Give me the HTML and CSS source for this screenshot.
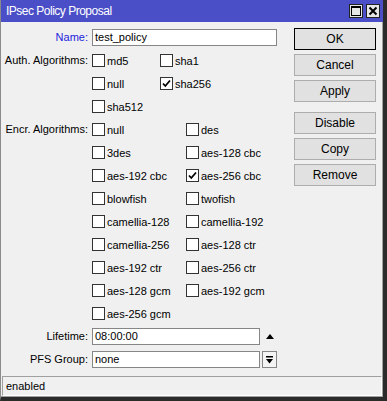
FILE: index.html
```html
<!DOCTYPE html>
<html lang="en">
<head>
    <meta charset="UTF-8">
    <title>IPsec Policy Proposal</title>
    <link rel="stylesheet" href="styles.css">
</head>
<body>
    <div class="window">
        <div class="titlebar">
            <span class="title">IPsec Policy Proposal</span>
            <div class="title-buttons">
                <span class="tbtn">
                    <svg width="10" height="10" viewBox="0 0 10 10"><rect x="0.5" y="0.5" width="9" height="9" fill="none" stroke="#000"/><rect x="0" y="0" width="10" height="2" fill="#000"/></svg>
                </span>
                <span class="tbtn">
                    <svg width="10" height="10" viewBox="0 0 10 10"><path d="M1.5 1.5 L8.5 8.5 M8.5 1.5 L1.5 8.5" stroke="#000" stroke-width="2"/></svg>
                </span>
            </div>
        </div>

        <div class="content">
            <div class="form">
                <div class="label name-label">Name:</div>
                <div class="field"><div class="input name-input">test_policy</div></div>

                <div class="label">Auth. Algorithms:</div>
                <div class="checks auth">
                    <span class="check"><i class="box"></i>md5</span>
                    <span class="check"><i class="box"></i>sha1</span>
                    <span class="check"><i class="box"></i>null</span>
                    <span class="check"><i class="box checked"><svg width="11" height="11" viewBox="0 0 11 11"><path d="M2 5.5 L4.3 8 L9 2.5" fill="none" stroke="#000" stroke-width="1.8"/></svg></i>sha256</span>
                    <span class="check"><i class="box"></i>sha512</span>
                </div>

                <div class="label">Encr. Algorithms:</div>
                <div class="checks encr">
                    <span class="check"><i class="box"></i>null</span>
                    <span class="check"><i class="box"></i>des</span>
                    <span class="check"><i class="box"></i>3des</span>
                    <span class="check"><i class="box"></i>aes-128 cbc</span>
                    <span class="check"><i class="box"></i>aes-192 cbc</span>
                    <span class="check"><i class="box checked"><svg width="11" height="11" viewBox="0 0 11 11"><path d="M2 5.5 L4.3 8 L9 2.5" fill="none" stroke="#000" stroke-width="1.8"/></svg></i>aes-256 cbc</span>
                    <span class="check"><i class="box"></i>blowfish</span>
                    <span class="check"><i class="box"></i>twofish</span>
                    <span class="check"><i class="box"></i>camellia-128</span>
                    <span class="check"><i class="box"></i>camellia-192</span>
                    <span class="check"><i class="box"></i>camellia-256</span>
                    <span class="check"><i class="box"></i>aes-128 ctr</span>
                    <span class="check"><i class="box"></i>aes-192 ctr</span>
                    <span class="check"><i class="box"></i>aes-256 ctr</span>
                    <span class="check"><i class="box"></i>aes-128 gcm</span>
                    <span class="check"><i class="box"></i>aes-192 gcm</span>
                    <span class="check"><i class="box"></i>aes-256 gcm</span>
                </div>

                <div class="label">Lifetime:</div>
                <div class="field">
                    <div class="input short-input">08:00:00</div>
                    <span class="up-arrow"></span>
                </div>

                <div class="label">PFS Group:</div>
                <div class="field">
                    <div class="input short-input">none</div>
                    <span class="drop-btn">
                        <svg width="7" height="8" viewBox="0 0 7 8"><rect x="0" y="0" width="7" height="1.5" fill="#000"/><polygon points="0,3 7,3 3.5,7.5" fill="#000"/></svg>
                    </span>
                </div>
            </div>

            <div class="actions">
                <button class="btn default">OK</button>
                <button class="btn">Cancel</button>
                <button class="btn">Apply</button>
                <button class="btn spaced">Disable</button>
                <button class="btn">Copy</button>
                <button class="btn">Remove</button>
            </div>
        </div>

        <div class="statusbar">enabled</div>
    </div>
</body>
</html>
```

FILE: styles.css
```css
body {
    margin: 0;
    background: #f0f0f0;
    font-family: "Liberation Sans", Arial, sans-serif;
    font-size: 11px;
    color: #000;
}
.window {
    width: 387px;
    height: 401px;
    box-sizing: border-box;
    border-left: 1px solid #8a8a8a;
    border-right: 4px solid #2b2b2b;
    border-bottom: 4px solid #2b2b2b;
    box-shadow: inset -1px -1px 0 #a0a0a0;
    display: flex;
    flex-direction: column;
    background: #f0f0f0;
}
.titlebar {
    height: 22px;
    background: #4b4fc7;
    display: flex;
    align-items: center;
    padding: 0 3px 0 5px;
}
.title {
    color: #fff;
    font-size: 12px;
    letter-spacing: -0.5px;
    flex: 1;
}
.title-buttons {
    display: flex;
    gap: 3px;
}
.tbtn {
    width: 14px;
    height: 14px;
    box-sizing: border-box;
    border: 1px solid #222;
    background: #e6e6e6;
    display: flex;
    align-items: center;
    justify-content: center;
}
.content {
    display: flex;
    padding-top: 4px;
}
.form {
    width: 285px;
    display: grid;
    grid-template-columns: 87px 1fr;
    column-gap: 4px;
    align-content: start;
}
.label {
    height: 23px;
    line-height: 23px;
    text-align: right;
    white-space: nowrap;
}
.name-label {
    color: #2323dc;
}
.field {
    height: 23px;
    display: flex;
    align-items: center;
}
.input {
    height: 17px;
    box-sizing: border-box;
    border: 1px solid #868686;
    background: #fff;
    padding: 0 2px;
    line-height: 15px;
}
.name-input {
    width: 185px;
}
.short-input {
    width: 168px;
}
.up-arrow {
    width: 0;
    height: 0;
    margin-left: 6px;
    border-left: 4px solid transparent;
    border-right: 4px solid transparent;
    border-bottom: 5px solid #000;
}
.drop-btn {
    width: 15px;
    height: 17px;
    box-sizing: border-box;
    margin-left: 2px;
    border: 1px solid #868686;
    background: #f4f4f4;
    display: flex;
    align-items: center;
    justify-content: center;
}
.checks {
    display: grid;
    grid-auto-rows: 23px;
}
.auth {
    grid-template-columns: 68px 68px;
}
.encr {
    grid-template-columns: 94px 94px;
}
.check {
    display: flex;
    align-items: center;
    gap: 2px;
    white-space: nowrap;
}
.box {
    width: 13px;
    height: 13px;
    box-sizing: border-box;
    border: 1px solid #333;
    background: #fff;
    display: flex;
    align-items: center;
    justify-content: center;
}
.actions {
    display: flex;
    flex-direction: column;
    gap: 4px;
    margin-left: 8px;
    padding-top: 2px;
}
.btn {
    width: 82px;
    height: 22px;
    box-sizing: border-box;
    border: 1px solid #adadad;
    background: #e1e1e1;
    font-family: "Liberation Sans", Arial, sans-serif;
    font-size: 12px;
    color: #000;
    padding: 0;
}
.btn.default {
    border-color: #000;
}
.btn.spaced {
    margin-top: 6px;
}
.statusbar {
    margin: auto 1px 1px 1px;
    height: 20px;
    box-sizing: border-box;
    border-top: 1px solid #a0a0a0;
    border-left: 1px solid #a0a0a0;
    border-bottom: 1px solid #fff;
    border-right: 1px solid #fff;
    line-height: 18px;
    padding-left: 3px;
}
```
